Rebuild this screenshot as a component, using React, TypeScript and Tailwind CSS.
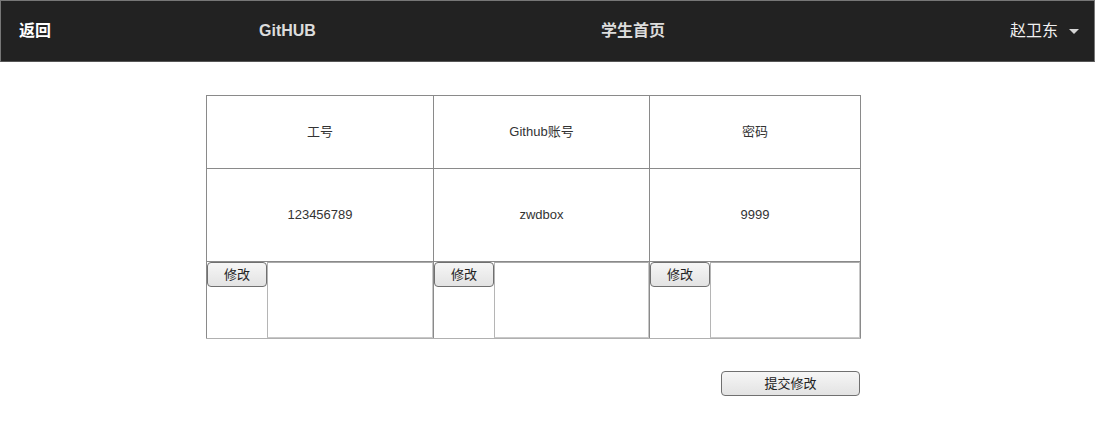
import React from "react";

const cjk = { fontFamily: '"Liberation Sans", "Noto Sans CJK SC", Arial, sans-serif' };

function EditCell({ border }: { border: string }) {
  return (
    <td className={`p-0 align-top ${border}`}>
      <div className="flex h-[76px]">
        <div className="w-[60px] shrink-0">
          <button
            className="w-[60px] h-[25px] rounded-[4px] border border-[#707070] bg-gradient-to-b from-[#f6f6f6] to-[#e3e3e3] text-[13px] text-[#222]"
            style={cjk}
          >
            修改
          </button>
        </div>
        <textarea className="flex-1 min-w-0 h-full border border-[#c8c8c8] border-t-[#aaa] border-l-[#b5b5b5] resize-none outline-none bg-white" />
      </div>
    </td>
  );
}

export default function App() {
  return (
    <div className="min-h-[427px] bg-white" style={cjk}>
      <nav className="h-[62px] bg-[#222222] border border-[#777] border-b-[#555] flex items-center relative">
        <span className="ml-[18px] text-white font-bold text-[16px]">返回</span>
        <span className="ml-[208px] text-[#dcdcdc] font-bold text-[16px]">GitHUB</span>
        <span className="absolute left-[600px] top-[18px] text-[#dcdcdc] font-bold text-[16px]">学生首页</span>
        <span className="ml-auto mr-[15px] flex items-center text-[#f0f0f0] text-[16px]">
          赵卫东
          <svg width="10" height="6" viewBox="0 0 10 6" className="ml-[11px] mt-[1px]">
            <path d="M0 0 L10 0 L5 5 Z" fill="#d5d5d5" />
          </svg>
        </span>
      </nav>

      <div className="pt-[33px] pl-[206px]">
        <table className="table-fixed border-collapse w-[654px] text-[13px] text-[#333]">
          <colgroup>
            <col className="w-[227px]" />
            <col className="w-[216px]" />
            <col className="w-[211px]" />
          </colgroup>
          <tbody>
            <tr className="h-[73px]">
              <td className="border border-[#8a8a8a] text-center">工号</td>
              <td className="border border-[#8a8a8a] text-center">Github账号</td>
              <td className="border border-[#8a8a8a] text-center">密码</td>
            </tr>
            <tr className="h-[93px]">
              <td className="border border-[#8a8a8a] text-center">123456789</td>
              <td className="border border-[#8a8a8a] text-center">zwdbox</td>
              <td className="border border-[#8a8a8a] text-center">9999</td>
            </tr>
            <tr>
              <EditCell border="border border-[#8a8a8a] border-b-[#b0b0b0]" />
              <EditCell border="border border-[#8a8a8a] border-b-[#b0b0b0]" />
              <EditCell border="border border-[#8a8a8a] border-b-[#b0b0b0]" />
            </tr>
          </tbody>
        </table>
        <div className="w-[654px] flex justify-end mt-[32px]">
          <button
            className="w-[139px] h-[25px] rounded-[4px] border border-[#707070] bg-gradient-to-b from-[#f6f6f6] to-[#e3e3e3] text-[13px] text-[#222]"
            style={cjk}
          >
            提交修改
          </button>
        </div>
      </div>
    </div>
  );
}
